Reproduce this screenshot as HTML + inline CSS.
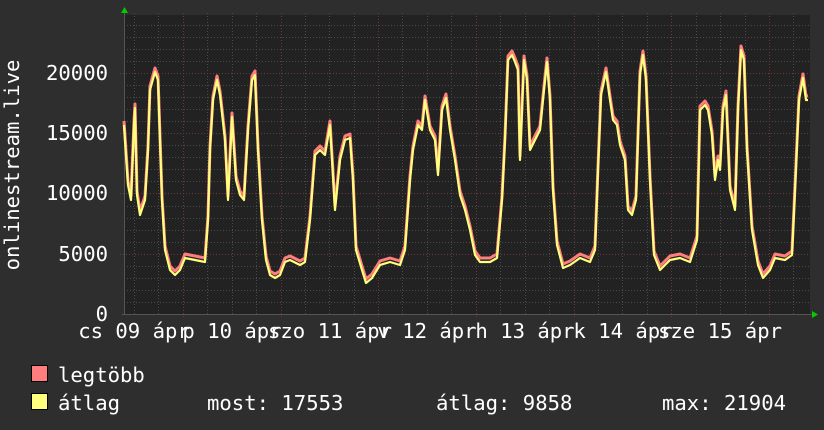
<!DOCTYPE html>
<html><head><meta charset="utf-8"><style>
html,body{margin:0;padding:0;background:#2e2e2e;}
svg{display:block}
text{font-family:"DejaVu Sans Mono","Liberation Mono",monospace;fill:#fff;font-size:20.6px}
</style></head><body>
<svg width="824" height="430" xmlns="http://www.w3.org/2000/svg">
<rect width="824" height="430" fill="#2e2e2e"/>
<rect x="124" y="15" width="686" height="300" fill="#222"/>
<g stroke="#4a4a4a" stroke-dasharray="1,2">
<line x1="124" y1="302.5" x2="810" y2="302.5"/><line x1="124" y1="290.5" x2="810" y2="290.5"/><line x1="124" y1="278.5" x2="810" y2="278.5"/><line x1="124" y1="266.5" x2="810" y2="266.5"/>
<line x1="124" y1="242.5" x2="810" y2="242.5"/><line x1="124" y1="230.5" x2="810" y2="230.5"/><line x1="124" y1="218.5" x2="810" y2="218.5"/><line x1="124" y1="206.5" x2="810" y2="206.5"/>
<line x1="124" y1="181.5" x2="810" y2="181.5"/><line x1="124" y1="169.5" x2="810" y2="169.5"/><line x1="124" y1="157.5" x2="810" y2="157.5"/><line x1="124" y1="145.5" x2="810" y2="145.5"/>
<line x1="124" y1="121.5" x2="810" y2="121.5"/><line x1="124" y1="109.5" x2="810" y2="109.5"/><line x1="124" y1="97.5" x2="810" y2="97.5"/><line x1="124" y1="85.5" x2="810" y2="85.5"/>
<line x1="124" y1="61.5" x2="810" y2="61.5"/><line x1="124" y1="49.5" x2="810" y2="49.5"/><line x1="124" y1="37.5" x2="810" y2="37.5"/><line x1="124" y1="25.5" x2="810" y2="25.5"/>
<line x1="134.5" y1="13" x2="134.5" y2="315"/><line x1="158.5" y1="13" x2="158.5" y2="315"/><line x1="207.5" y1="13" x2="207.5" y2="315"/><line x1="232.5" y1="13" x2="232.5" y2="315"/><line x1="256.5" y1="13" x2="256.5" y2="315"/>
<line x1="305.5" y1="13" x2="305.5" y2="315"/><line x1="329.5" y1="13" x2="329.5" y2="315"/><line x1="354.5" y1="13" x2="354.5" y2="315"/>
<line x1="402.5" y1="13" x2="402.5" y2="315"/><line x1="427.5" y1="13" x2="427.5" y2="315"/><line x1="451.5" y1="13" x2="451.5" y2="315"/>
<line x1="500.5" y1="13" x2="500.5" y2="315"/><line x1="525.5" y1="13" x2="525.5" y2="315"/><line x1="549.5" y1="13" x2="549.5" y2="315"/>
<line x1="598.5" y1="13" x2="598.5" y2="315"/><line x1="622.5" y1="13" x2="622.5" y2="315"/><line x1="647.5" y1="13" x2="647.5" y2="315"/>
<line x1="696.5" y1="13" x2="696.5" y2="315"/><line x1="720.5" y1="13" x2="720.5" y2="315"/><line x1="745.5" y1="13" x2="745.5" y2="315"/><line x1="793.5" y1="13" x2="793.5" y2="315"/>
</g>
<g stroke="#6a3a3a" stroke-dasharray="1,2">
<line x1="120" y1="254.5" x2="810" y2="254.5"/><line x1="120" y1="193.5" x2="810" y2="193.5"/><line x1="120" y1="133.5" x2="810" y2="133.5"/><line x1="120" y1="73.5" x2="810" y2="73.5"/>
<line x1="183.5" y1="13" x2="183.5" y2="318"/><line x1="281.5" y1="13" x2="281.5" y2="318"/><line x1="378.5" y1="13" x2="378.5" y2="318"/><line x1="476.5" y1="13" x2="476.5" y2="318"/><line x1="574.5" y1="13" x2="574.5" y2="318"/><line x1="671.5" y1="13" x2="671.5" y2="318"/><line x1="769.5" y1="13" x2="769.5" y2="318"/>
</g>
<line x1="124.5" y1="13" x2="124.5" y2="315" stroke="#555"/>
<line x1="122" y1="314.5" x2="812" y2="314.5" stroke="#555"/>
<polygon points="121,13 124.5,7 128,13" fill="#0c0"/>
<polygon points="812,311 818,314.5 812,318" fill="#0c0"/>
<g fill="none" stroke-linejoin="round">
<polyline transform="translate(0,-4)" stroke="#ff7d7d" stroke-width="3" points="124,125 128,185 131,200 134,125 135,108 137,195 140,215 145,200 148,150 150,90 155,72 158,80 160,140 162,200 165,250 170,270 175,275 180,270 185,258 195,260 205,262 208,220 210,150 213,100 217,80 220,95 225,140 228,200 232,117 236,180 240,195 244,200 248,130 252,80 255,75 258,150 262,220 266,260 270,275 275,278 280,275 285,262 290,260 300,265 305,262 310,220 315,155 320,150 325,155 330,125 335,210 340,160 345,140 350,138 353,180 356,250 362,270 366,283 372,278 380,265 390,262 400,265 405,250 410,180 413,150 418,125 422,130 425,100 430,130 435,140 438,175 442,110 446,98 450,130 455,160 460,195 465,210 470,230 475,255 480,262 490,262 497,258 502,200 505,140 508,60 512,55 515,62 518,70 520,160 524,60 527,80 530,150 535,140 540,130 544,90 547,62 550,100 553,190 557,245 563,268 570,265 580,258 590,262 595,250 598,170 601,95 606,72 610,100 613,120 617,125 620,145 625,160 628,210 632,215 636,200 640,75 643,55 646,80 650,180 654,255 660,270 665,265 670,260 680,258 690,262 697,240 700,110 705,105 708,110 712,135 715,180 718,160 720,170 723,110 726,95 730,190 735,210 738,110 741,50 744,60 747,150 752,230 758,265 763,278 770,270 775,258 785,260 792,255 795,190 799,100 803,78 806,100 808,100"/>
<polyline stroke="#ffff7d" stroke-width="2.2" points="124,125 128,185 131,200 134,125 135,108 137,195 140,215 145,200 148,150 150,90 155,72 158,80 160,140 162,200 165,250 170,270 175,275 180,270 185,258 195,260 205,262 208,220 210,150 213,100 217,80 220,95 225,140 228,200 232,117 236,180 240,195 244,200 248,130 252,80 255,75 258,150 262,220 266,260 270,275 275,278 280,275 285,262 290,260 300,265 305,262 310,220 315,155 320,150 325,155 330,125 335,210 340,160 345,140 350,138 353,180 356,250 362,270 366,283 372,278 380,265 390,262 400,265 405,250 410,180 413,150 418,125 422,130 425,100 430,130 435,140 438,175 442,110 446,98 450,130 455,160 460,195 465,210 470,230 475,255 480,262 490,262 497,258 502,200 505,140 508,60 512,55 515,62 518,70 520,160 524,60 527,80 530,150 535,140 540,130 544,90 547,62 550,100 553,190 557,245 563,268 570,265 580,258 590,262 595,250 598,170 601,95 606,72 610,100 613,120 617,125 620,145 625,160 628,210 632,215 636,200 640,75 643,55 646,80 650,180 654,255 660,270 665,265 670,260 680,258 690,262 697,240 700,110 705,105 708,110 712,135 715,180 718,160 720,170 723,110 726,95 730,190 735,210 738,110 741,50 744,60 747,150 752,230 758,265 763,278 770,270 775,258 785,260 792,255 795,190 799,100 803,78 806,100 808,100"/>
</g>
<g text-anchor="end">
<text x="108" y="80">20000</text><text x="108" y="140">15000</text><text x="108" y="200">10000</text><text x="108" y="261">5000</text><text x="108" y="321">0</text>
</g>
<text transform="translate(19,165) rotate(-90)" text-anchor="middle">onlinestream.live</text>
<g text-anchor="middle" style="font-size:21.5px">
<text x="134" y="338">cs 09 ápr</text><text x="232" y="338">p 10 ápr</text><text x="330" y="338">szo 11 ápr</text><text x="427" y="338">v 12 ápr</text><text x="525" y="338">h 13 ápr</text><text x="623" y="338">k 14 ápr</text><text x="720" y="338">sze 15 ápr</text>
</g>
<rect x="31.5" y="365.5" width="16" height="16" fill="#ff7d7d" stroke="#000"/>
<rect x="31.5" y="393.5" width="16" height="16" fill="#ffff7d" stroke="#000"/>
<g style="font-size:21.6px">
<text x="58" y="382">legtöbb</text>
<text x="58" y="410">átlag</text>
<text x="207" y="410">most: 17553</text>
<text x="436" y="410">átlag: 9858</text>
<text x="662" y="410">max: 21904</text>
</g>
</svg>
</body></html>
